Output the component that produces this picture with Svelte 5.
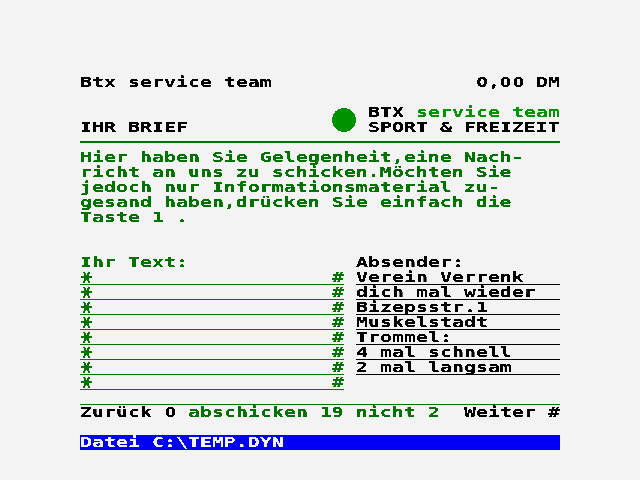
<script>
  const intro = [
    'Hier haben Sie Gelegenheit,eine Nach-',
    'richt an uns zu schicken.Möchten Sie',
    'jedoch nur Informationsmaterial zu-',
    'gesand haben,drücken Sie einfach die',
    'Taste 1 .'
  ];
  const sender = ['Verein Verrenk', 'dich mal wieder', 'Bizepsstr.1', 'Muskelstadt', 'Trommel:', '4 mal schnell', '2 mal langsam'];
</script>

{#snippet t(text)}<span class="t">{#each text.split(/(0)/) as part}{#if part === '0'}<span class="zero">0</span>{:else}{part}{/if}{/each}</span>{/snippet}

<main>
  <div class="row split"><div>{@render t('Btx service team')}</div><div class="price">{@render t('0,00 DM')}</div></div>
  <header>
    <div class="title">{@render t('IHR BRIEF')}</div>
    <svg class="dot" width="24" height="24" viewBox="0 0 24 24" shape-rendering="crispEdges"><circle cx="12" cy="12" r="12" fill="#009200" /></svg>
    <div class="brand">
      <div class="row split"><div class="word">{@render t('BTX')}</div><div class="light">{@render t('service team')}</div></div>
      <div class="row">{@render t('SPORT & FREIZEIT')}</div>
    </div>
  </header>
  <div class="rule"></div>
  <section class="intro green">
    {#each intro as line}<div class="row">{@render t(line)}</div>{/each}
  </section>
  <section class="form">
    <div class="message green">
      <div class="row">{@render t('Ihr Text:')}</div>
      {#each Array(8) as _}
        <div class="row field split"><div class="cell star"><span class="t">*</span></div><div class="cell">{@render t('#')}</div></div>
      {/each}
    </div>
    <div class="sender">
      <div class="row">{@render t('Absender:')}</div>
      {#each sender as line}<div class="row field">{@render t(line)}</div>{/each}
    </div>
  </section>
  <footer>
    <div class="back">{@render t('Zurück 0')}</div>
    <div class="send green">{@render t('abschicken 19 nicht 2')}</div>
    <div class="next">{@render t('Weiter #')}</div>
  </footer>
  <div class="row status">{@render t('Datei C:\\TEMP.DYN')}</div>
</main>

<svg width="0" height="0" class="defs" aria-hidden="true">
  <filter id="crisp" x="0" y="0" width="1" height="1" color-interpolation-filters="sRGB">
    <feComponentTransfer><feFuncA type="linear" slope="20" intercept="-7.5" /></feComponentTransfer>
  </filter>
</svg>

<style>
  :global(body) { margin: 0; background: #f3f3f3; }
  main {
    box-sizing: border-box;
    width: 640px;
    height: 480px;
    padding: 75px 80px 0;
    background: #f3f3f3;
    color: #000;
    font: bold 13.7px/15px "DejaVu Sans Mono", monospace;
    overflow: hidden;
  }
  .defs { display: block; }
  .row, footer { height: 15px; box-sizing: border-box; white-space: pre; }
  .split, header, .form, footer { display: flex; justify-content: space-between; }
  .t {
    display: block;
    width: max-content;
    height: 15px;
    white-space: pre;
    transform: scaleX(1.4549);
    transform-origin: 0 0;
    filter: url(#crisp);
  }
  .zero {
    display: inline-block;
    width: 8.248px;
    height: 15px;
    vertical-align: top;
    text-align: center;
    font-family: "DejaVu Sans Condensed", "DejaVu Sans", sans-serif;
    font-stretch: condensed;
    transform: scaleX(0.9);
  }
  .price { width: 84px; }
  header { height: 45px; padding-top: 15px; box-sizing: border-box; }
  .title { width: 252px; padding-top: 15px; }
  .dot { margin: 3px 12px 0 0; }
  .brand { width: 192px; }
  .word { width: 48px; }
  .light { width: 144px; color: #009200; }
  .rule { height: 2px; margin-top: 6px; background: #007500; }
  .green { color: #007200; }
  .intro { height: 75px; margin-top: 7px; }
  .form { height: 135px; margin-top: 30px; }
  .message { width: 264px; }
  .sender { width: 204px; }
  .field { border-bottom: 1px solid; }
  .cell { width: 12px; }
  .star .t {
    transform: translate(1.9px, 1.9px) rotate(90deg) scale(1.78, 1.7);
    transform-origin: 4.12px 5.3px;
  }
  footer { height: 16px; margin-top: 14px; border-top: 1px solid #007200; }
  .back { width: 108px; }
  .send { width: 276px; }
  .next { width: 96px; }
  .status { margin-top: 15px; background: #0000f3; color: #f3f3f3; }
</style>
